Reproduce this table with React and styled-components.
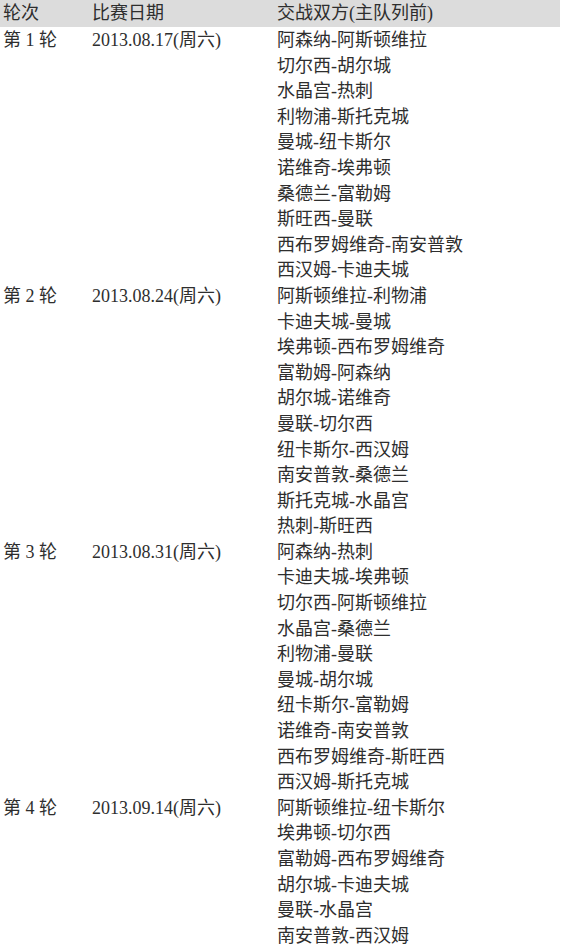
import React from "react";
import styled, { createGlobalStyle } from "styled-components";

const GlobalStyle = createGlobalStyle`
  html, body {
    margin: 0;
    padding: 0;
    background: #ffffff;
  }
  body {
    font-family: "Liberation Serif", "Noto Sans CJK SC", serif;
    color: #2e2e2e;
    overflow: hidden;
  }
`;

const Table = styled.div`
  width: 560px;
  display: flex;
  flex-direction: column;
`;

const Row = styled.div`
  display: grid;
  grid-template-columns: 89px 185px 1fr;
  align-items: start;
  background: ${(props) => (props.header ? "#dcdcdc" : "transparent")};
  height: ${(props) => (props.header ? "27px" : "auto")};
  margin-bottom: ${(props) => (props.header ? "1px" : "0")};
`;

const Cell = styled.div`
  font-size: 18px;
  line-height: ${(props) => (props.header ? "26px" : "25.6px")};
  padding-left: 3px;
  white-space: nowrap;
`;

const MatchList = styled.div`
  display: flex;
  flex-direction: column;
`;

const rounds = [
  {
    name: "第 1 轮",
    date: "2013.08.17(周六)",
    matches: [
      "阿森纳-阿斯顿维拉",
      "切尔西-胡尔城",
      "水晶宫-热刺",
      "利物浦-斯托克城",
      "曼城-纽卡斯尔",
      "诺维奇-埃弗顿",
      "桑德兰-富勒姆",
      "斯旺西-曼联",
      "西布罗姆维奇-南安普敦",
      "西汉姆-卡迪夫城",
    ],
  },
  {
    name: "第 2 轮",
    date: "2013.08.24(周六)",
    matches: [
      "阿斯顿维拉-利物浦",
      "卡迪夫城-曼城",
      "埃弗顿-西布罗姆维奇",
      "富勒姆-阿森纳",
      "胡尔城-诺维奇",
      "曼联-切尔西",
      "纽卡斯尔-西汉姆",
      "南安普敦-桑德兰",
      "斯托克城-水晶宫",
      "热刺-斯旺西",
    ],
  },
  {
    name: "第 3 轮",
    date: "2013.08.31(周六)",
    matches: [
      "阿森纳-热刺",
      "卡迪夫城-埃弗顿",
      "切尔西-阿斯顿维拉",
      "水晶宫-桑德兰",
      "利物浦-曼联",
      "曼城-胡尔城",
      "纽卡斯尔-富勒姆",
      "诺维奇-南安普敦",
      "西布罗姆维奇-斯旺西",
      "西汉姆-斯托克城",
    ],
  },
  {
    name: "第 4 轮",
    date: "2013.09.14(周六)",
    matches: [
      "阿斯顿维拉-纽卡斯尔",
      "埃弗顿-切尔西",
      "富勒姆-西布罗姆维奇",
      "胡尔城-卡迪夫城",
      "曼联-水晶宫",
      "南安普敦-西汉姆",
    ],
  },
];

export default function App() {
  return (
    <>
      <GlobalStyle />
      <Table>
        <Row header>
          <Cell header>轮次</Cell>
          <Cell header>比赛日期</Cell>
          <Cell header>交战双方(主队列前)</Cell>
        </Row>
        {rounds.map((r) => (
          <Row key={r.name}>
            <Cell>{r.name}</Cell>
            <Cell>{r.date}</Cell>
            <MatchList>
              {r.matches.map((m) => (
                <Cell key={m}>{m}</Cell>
              ))}
            </MatchList>
          </Row>
        ))}
      </Table>
    </>
  );
}
